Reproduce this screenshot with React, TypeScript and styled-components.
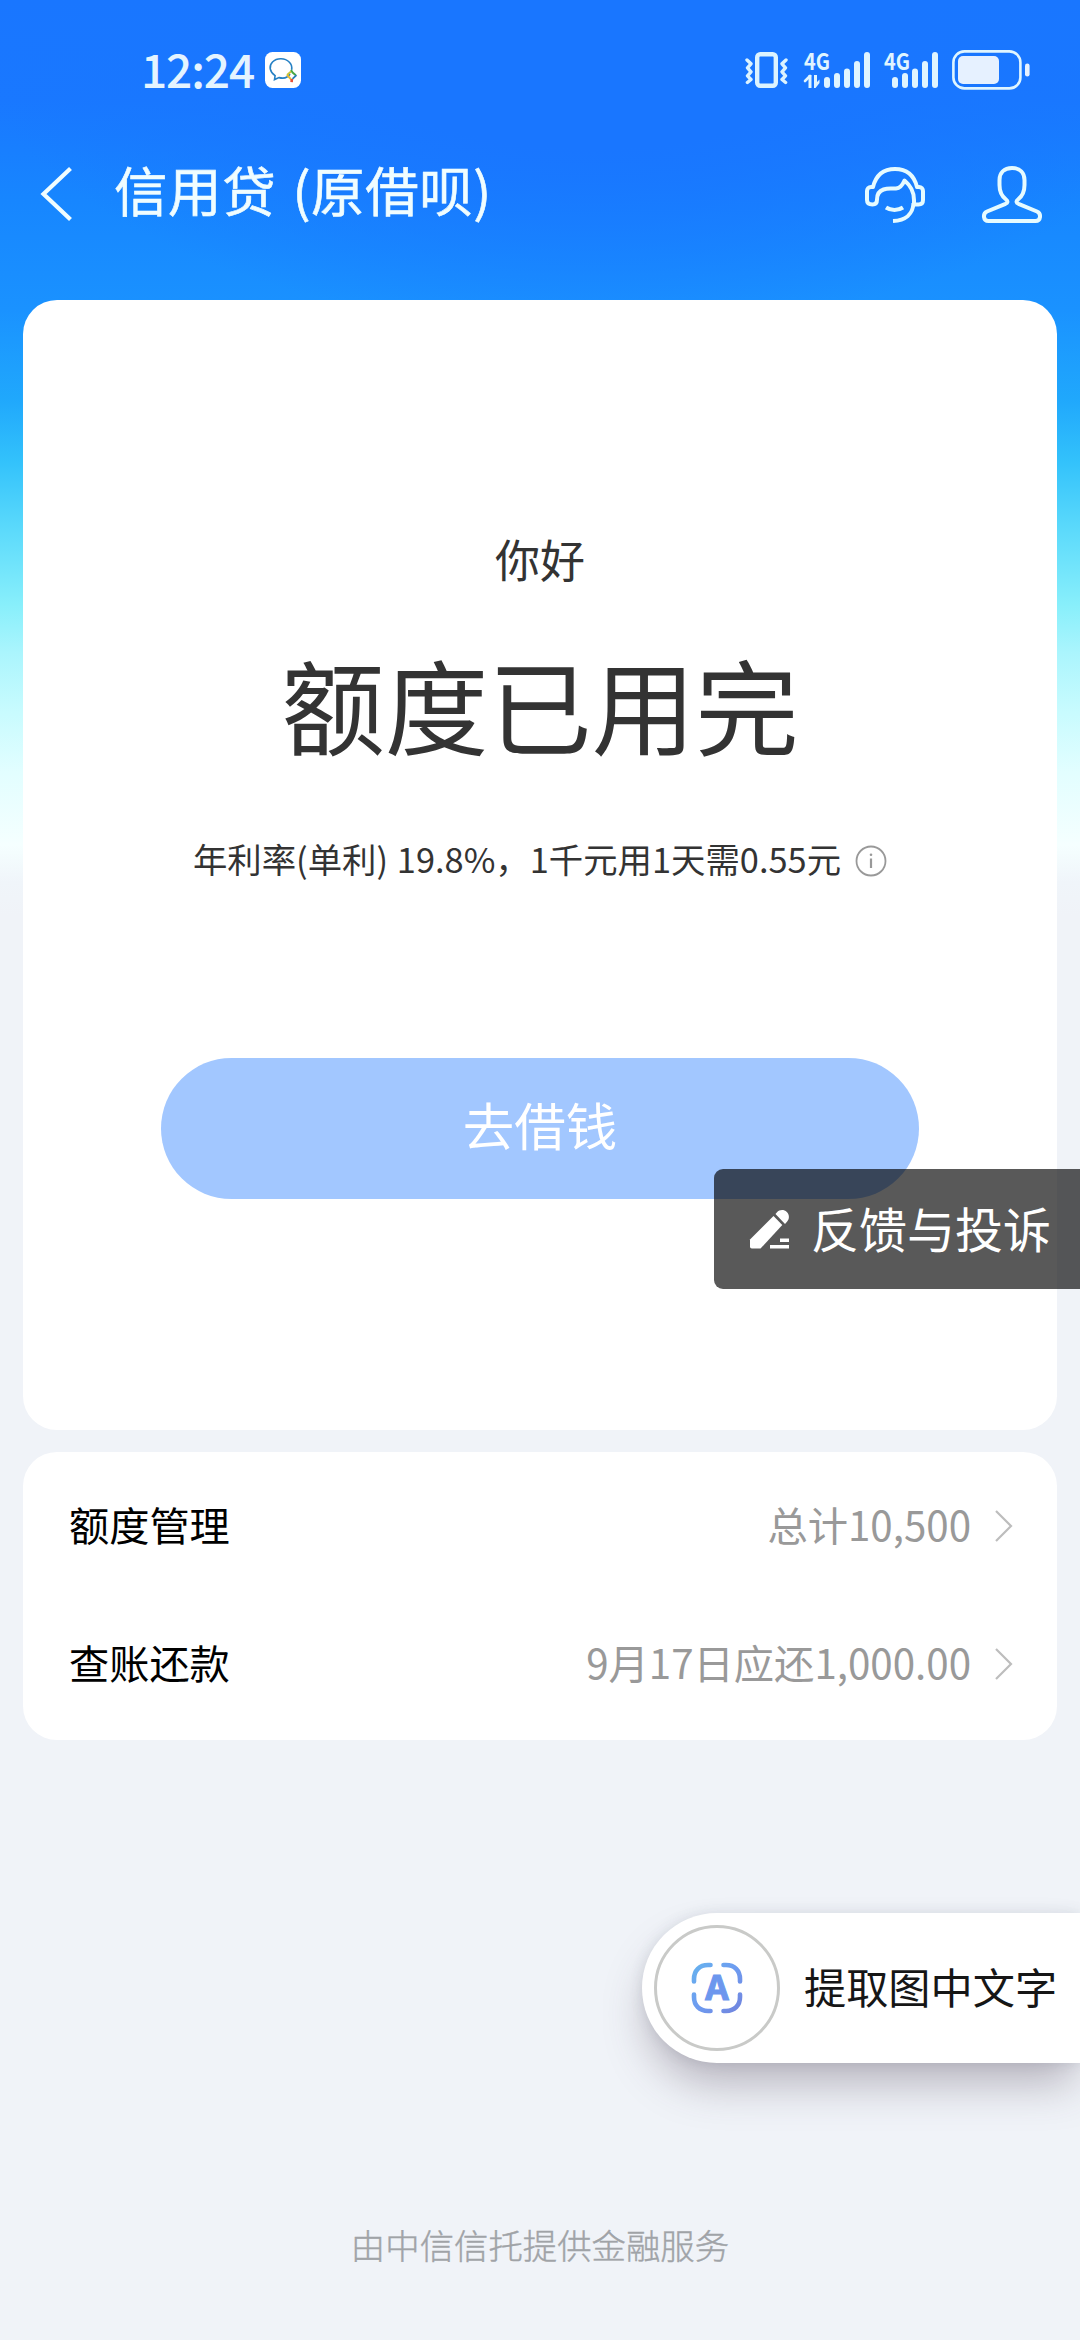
import React from 'react';
import styled, { createGlobalStyle } from 'styled-components';

const GlobalStyle = createGlobalStyle`
  * { box-sizing: border-box; }
  html, body { margin: 0; padding: 0; }
  body {
    font-family: "Noto Sans CJK SC", "Noto Sans", sans-serif;
    background: #f0f3f8;
  }
  svg { display: block; flex-shrink: 0; }
`;

const Screen = styled.div`
  position: relative;
  display: flex;
  flex-direction: column;
  width: 1080px;
  height: 2340px;
  overflow: hidden;
  background:
    radial-gradient(ellipse 640px 330px at 55% 0, #1976ff 45%, rgba(25, 118, 255, 0) 100%),
    linear-gradient(
      180deg,
      #1976ff 0,
      #1978ff 100px,
      #1786ff 200px,
      #1a92ff 310px,
      #20a8fc 400px,
      #33c2fb 462px,
      #5ad9fb 527px,
      #88effb 605px,
      #aaf5fd 652px,
      #c8fbfe 712px,
      #e2feff 772px,
      #f5ffff 845px,
      #f0f5fa 882px,
      #f0f3f8 915px
    );
`;

const StatusBar = styled.header`
  display: flex;
  align-items: center;
  justify-content: space-between;
  height: 140px;
  padding: 0 50px 0 141px;
`;

const StatusGroup = styled.div<{ $gap: number }>`
  display: flex;
  align-items: center;
  gap: ${(p) => p.$gap}px;
`;

const Clock = styled.span`
  padding-bottom: 5px;
  font-size: 46px;
  line-height: 60px;
  font-weight: 500;
  letter-spacing: -1.1px;
  color: #e4f4ff;
`;

const NavBar = styled.nav`
  display: flex;
  align-items: center;
  height: 108px;
  padding: 0 37px 0 39px;
`;

const Title = styled.h1`
  flex: 1;
  margin: 0 0 0 41px;
  padding-bottom: 10px;
  font-size: 53.5px;
  line-height: 80px;
  font-weight: 400;
  letter-spacing: 0.6px;
  word-spacing: 3.5px;
  color: #f0fdff;
  -webkit-text-stroke: 0.6px #f0fdff;
`;

const NavActions = styled.div`
  display: flex;
  gap: 55px;
`;

const Content = styled.main`
  display: flex;
  flex-direction: column;
  gap: 22px;
  padding: 52px 23px 0;
`;

const Card = styled.section`
  display: flex;
  flex-direction: column;
  border-radius: 34px;
  background: #fff;
`;

const CreditCard = styled(Card)`
  align-items: center;
  height: 1130px;
  padding-top: 227px;
  color: #333;
`;

const Greeting = styled.p`
  margin: 0;
  font-size: 45px;
  line-height: 64px;
`;

const Headline = styled.h2`
  margin: 42px 0 0;
  font-size: 103.5px;
  line-height: 140px;
  font-weight: 400;
`;

const RateLine = styled.p`
  display: flex;
  align-items: center;
  gap: 14px;
  margin: 61px 0 0;
  font-size: 34.4px;
  line-height: 48px;
  white-space: nowrap;
`;

const RateText = styled.span`
  padding-bottom: 5px;
  word-spacing: 1px;
`;

const BorrowButton = styled.button`
  width: 758px;
  height: 141px;
  margin-top: 171px;
  padding: 0 0 9px;
  border: 0;
  border-radius: 71px;
  background: #a2c7ff;
  color: #fff;
  font: 400 51.5px/72px "Noto Sans CJK SC", sans-serif;
`;

const ListCard = styled(Card)`
  height: 288px;
  padding: 5px 43px 0 46px;
`;

const Row = styled.div`
  display: flex;
  align-items: center;
  height: 138px;
`;

const RowLabel = styled.span`
  flex: 1;
  padding-bottom: 5px;
  font-size: 40.2px;
  line-height: 56px;
  color: #000;
`;

const RowValue = styled.span`
  margin-right: 23px;
  padding-bottom: 5px;
  font-size: 40.3px;
  line-height: 56px;
  color: #999;
`;

const Footer = styled.footer`
  margin-top: auto;
  padding-bottom: 72px;
  text-align: center;
  font-size: 34.4px;
  line-height: 48px;
  font-weight: 300;
  color: #a0a3a7;
  -webkit-text-stroke: 0.4px #a0a3a7;
`;

const FloatingLabel = styled.span`
  padding-bottom: 5px;
`;

const FeedbackTab = styled.aside`
  position: absolute;
  top: 1169px;
  right: 0;
  display: flex;
  align-items: center;
  gap: 21px;
  width: 366px;
  height: 120px;
  padding-left: 35px;
  border-radius: 9px 0 0 9px;
  background: rgba(0, 0, 0, 0.65);
  color: #fff;
  font-size: 48px;
  line-height: 70px;
  white-space: nowrap;
`;

const ExtractPill = styled.aside`
  position: absolute;
  top: 1913px;
  right: 0;
  display: flex;
  align-items: center;
  gap: 24px;
  width: 438px;
  height: 150px;
  padding-left: 12px;
  border-radius: 75px 0 0 75px;
  background: #fff;
  box-shadow: 0 26px 44px -6px rgba(70, 55, 75, 0.34), 0 0 14px rgba(60, 70, 90, 0.12);
  color: #161616;
  font-size: 42.2px;
  line-height: 60px;
  white-space: nowrap;
`;

const ScanCircle = styled.div`
  display: flex;
  align-items: center;
  justify-content: center;
  width: 126px;
  height: 126px;
  border: 3px solid #c9cac8;
  border-radius: 50%;
`;

const ScanLetter = styled.text`
  font: 700 34px Inter, sans-serif;
`;

const NetworkLabel = styled.text`
  font: 600 23px "Noto Sans CJK SC", sans-serif;
`;

const ChatBadge = () => (
  <svg width="36" height="36" viewBox="0 0 36 36" fill="none">
    <rect width="36" height="36" rx="7.5" fill="#fff" />
    <path d="M25 22c-2 3.4-6 4.8-11 3.600l-4.500 2 .6-4C4.500 19.800 3.600 14 7.500 10 12 5.600 20 5.800 24.400 10.300c2 2 2.700 4.800 2.200 7.500" stroke="#2580c4" strokeWidth="1.600" />
    <path d="m26 18 1.600 2.600 3.200 2.600" stroke="#46a846" strokeWidth="2" />
    <path d="m31.500 23.200-4 3.600" stroke="#257cb8" strokeWidth="1.800" />
    <path d="m22 22.800 4 4.600" stroke="#e9b92f" strokeWidth="2" />
    <path d="m26.800 27-.2 3.200" stroke="#e84e35" strokeWidth="2.600" />
    <path d="m22 23 4-3.500" stroke="#c9c43a" strokeWidth="1.800" />
  </svg>
);

const VibrateIcon = () => (
  <svg width="46" height="38" viewBox="0 0 46 38" fill="none" stroke="#dcf3ff" strokeLinecap="round" strokeLinejoin="round">
    <rect x="13.200" y="3.200" width="18.600" height="31.600" rx="3" strokeWidth="4.400" />
    <path d="m3 9 4 3.800-3.500 4 3.500 4-3.500 4L7 28.500l-3.600 3M42 9l-4 3.800 3.500 4-3.500 4 3.500 4-3.500 3.700 3.600 3" strokeWidth="3.400" />
  </svg>
);

const SignalIcon = ({ data }: { data?: boolean }) => {
  const bars = data
    ? [[20, 26], [30, 22], [40, 17.5], [50, 10], [60, 1]]
    : [[8, 26], [18, 22], [28, 17.5], [38, 10], [48, 1]];
  const width = data ? 66 : 54;
  return (
    <svg width={width} height="38" viewBox={`0 0 ${width} 38`} fill="#e0f5ff" overflow="visible">
      <NetworkLabel x="0" y="18.5" textLength="26" lengthAdjust="spacingAndGlyphs">4G</NetworkLabel>
      {bars.map(([x, y]) => (
        <rect key={x} x={x} y={y} width="6" height={37 - y} rx="3" />
      ))}
      {data && (
        <path d="m1 30 5-5" stroke="#e0f5ff" strokeWidth="2.600" strokeLinecap="round" />
      )}
      {data && <path d="M4.500 24h3v13h-3zM10 24h3v7l2.500-2.500v3.500L11.500 37H10z" />}
    </svg>
  );
};

const BatteryIcon = () => (
  <svg width="78" height="40" viewBox="0 0 78 40" fill="#e6f1ff">
    <rect x="1.400" y="1.400" width="67" height="37" rx="11" fill="none" stroke="#dff5ff" strokeWidth="2.600" />
    <rect x="6" y="6" width="41" height="28" rx="5" />
    <rect x="73" y="13.500" width="4.600" height="13" rx="2.300" />
  </svg>
);

const BackIcon = () => (
  <svg width="34" height="56" viewBox="0 0 34 56" fill="none">
    <path d="M31.500 2.500 4.500 28l27 25.500" stroke="#f0fdff" strokeWidth="4.200" />
  </svg>
);

const SupportIcon = () => (
  <svg width="62" height="58" viewBox="0 0 62 58" fill="none" stroke="#e6fbff" strokeWidth="4" strokeLinejoin="round">
    <path d="M7 22h2C12 10 20 4 31 4s19 6 22 18h2c2.400 0 4 1.600 4 4v9c0 2.800-1.600 4.500-4.500 4.500H50V35C50 27 46 20 40.500 15.500 39 19 37 23 32 23.500c-5 .4-8-.5-12.500 1-4.500 1.500-6.500 5-6.500 10 0 3.500-1.500 5-4.500 5S3 38.300 3 35v-9c0-2.400 1.600-4 4-4Z" />
    <path d="M49.500 38c-.5 11-8 17.500-20.500 18" />
    <path d="M22 42.500c5 3.300 12 3.300 17 0" />
  </svg>
);

const PersonIcon = () => (
  <svg width="62" height="58" viewBox="0 0 62 58" fill="none" stroke="#e6fbff" strokeWidth="4" strokeLinejoin="round">
    <path d="M31 3c-8 0-12.500 5-12.500 12v5c0 6 2.500 11.500 6.500 14.500 2.200 1.700 1.800 3.200-.5 4.300L6 46.500c-4.500 2-4 9.500 1.500 9.500h47c5.500 0 6-7.500 1.500-9.500l-18.500-7.700c-2.300-1.100-2.700-2.600-.5-4.300 4-3 6.500-8.500 6.500-14.500v-5C43.500 8 39 3 31 3Z" />
  </svg>
);

const InfoIcon = () => (
  <svg width="32" height="32" viewBox="0 0 32 32" fill="none" stroke="#999">
    <circle cx="16" cy="16" r="14.500" strokeWidth="1.800" />
    <path d="M16 13.500V23" strokeWidth="2.200" />
    <circle cx="16" cy="9.800" r="1.300" fill="#999" stroke="none" />
  </svg>
);

const PencilIcon = () => (
  <svg width="41" height="41" viewBox="0 0 41 41" fill="#fff">
    <path d="M1 30.500 24.500 7l8.800 9L11.500 39.500H2.800C1.700 39.500 1 38.700 1 37.500Z" />
    <path d="m26.500 5 1.300-1.500c2.800-3 7.200-3.200 10-.4s2.800 7 .2 9.700L36 15Z" />
    <path d="M31 29.500h9V33h-9ZM21 36h19v3.500H21Z" />
  </svg>
);

const Chevron = () => (
  <svg width="20" height="34" viewBox="0 0 20 34" fill="none">
    <path d="m2 2 15 15L2 32" stroke="#bdbdbd" strokeWidth="2.200" />
  </svg>
);

const ScanIcon = () => (
  <svg width="52" height="52" viewBox="0 0 52 52">
    <defs>
      <linearGradient id="scan" x1="0" y1="0" x2="52" y2="52" gradientUnits="userSpaceOnUse">
        <stop offset="0" stopColor="#66b4ee" />
        <stop offset="0.500" stopColor="#6e9bf0" />
        <stop offset="1" stopColor="#7283dc" />
      </linearGradient>
    </defs>
    <path
      d="M3 19.500V17C3 8.500 8.500 3 17 3h2.500M32.500 3H35c8.500 0 14 5.500 14 14v2.500M49 32.500V35c0 8.500-5.500 14-14 14h-2.500M19.500 49H17C8.500 49 3 43.500 3 35v-2.500"
      fill="none"
      stroke="url(#scan)"
      strokeWidth="4.600"
      strokeLinecap="round"
    />
    <ScanLetter x="26" y="38" textAnchor="middle" fill="#6c97ee" stroke="#6c97ee" strokeWidth="1">A</ScanLetter>
  </svg>
);

const rows = [
  { label: '额度管理', value: '总计10,500' },
  { label: '查账还款', value: '9月17日应还1,000.00' },
];

export default function App() {
  return (
    <>
      <GlobalStyle />
      <Screen>
        <StatusBar>
          <StatusGroup $gap={11}>
            <Clock>12:24</Clock>
            <ChatBadge />
          </StatusGroup>
          <StatusGroup $gap={14}>
            <VibrateIcon />
            <SignalIcon data />
            <SignalIcon />
            <BatteryIcon />
          </StatusGroup>
        </StatusBar>
        <NavBar>
          <BackIcon />
          <Title>信用贷 (原借呗)</Title>
          <NavActions>
            <SupportIcon />
            <PersonIcon />
          </NavActions>
        </NavBar>
        <Content>
          <CreditCard>
            <Greeting>你好</Greeting>
            <Headline>额度已用完</Headline>
            <RateLine>
              <RateText>年利率(单利) 19.8%，1千元用1天需0.55元</RateText>
              <InfoIcon />
            </RateLine>
            <BorrowButton>去借钱</BorrowButton>
          </CreditCard>
          <ListCard>
            {rows.map((row) => (
              <Row key={row.label}>
                <RowLabel>{row.label}</RowLabel>
                <RowValue>{row.value}</RowValue>
                <Chevron />
              </Row>
            ))}
          </ListCard>
        </Content>
        <Footer>由中信信托提供金融服务</Footer>
        <FeedbackTab>
          <PencilIcon />
          <FloatingLabel>反馈与投诉</FloatingLabel>
        </FeedbackTab>
        <ExtractPill>
          <ScanCircle>
            <ScanIcon />
          </ScanCircle>
          <FloatingLabel>提取图中文字</FloatingLabel>
        </ExtractPill>
      </Screen>
    </>
  );
}
